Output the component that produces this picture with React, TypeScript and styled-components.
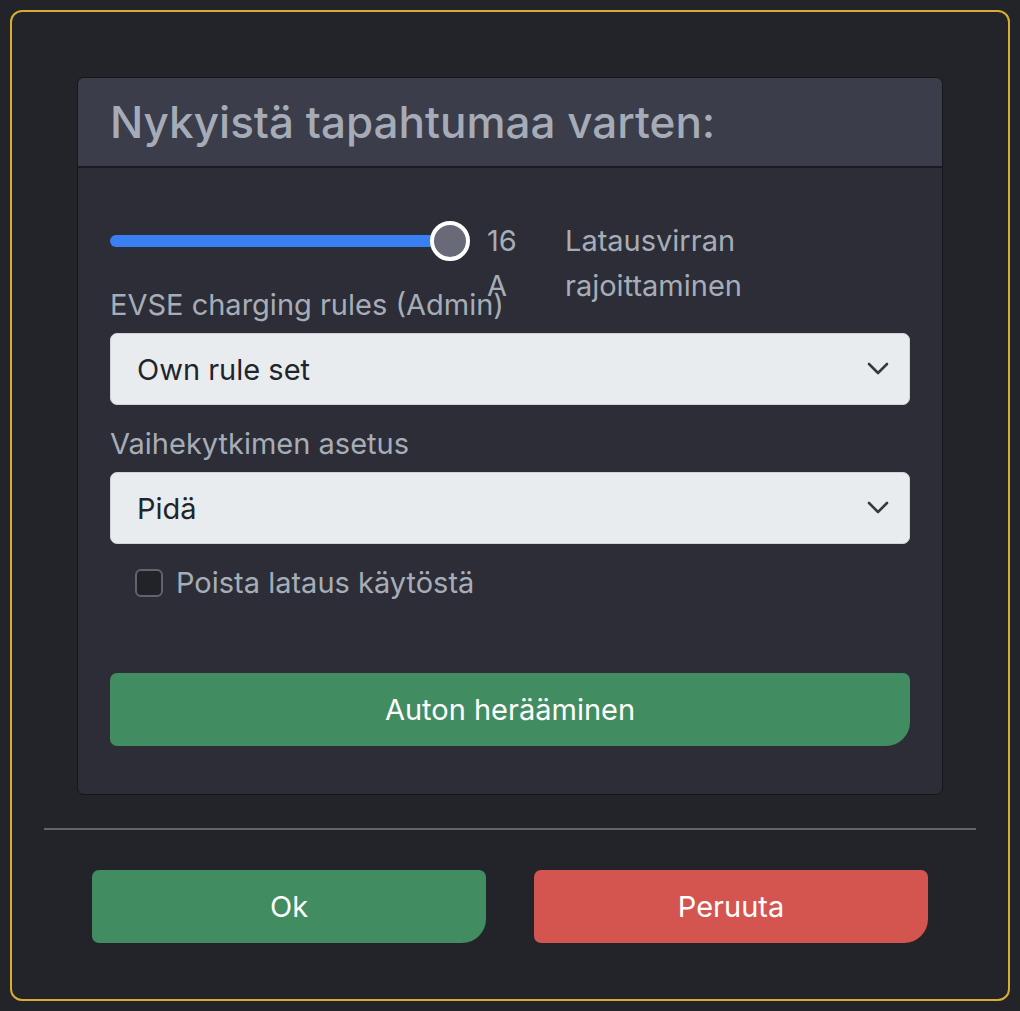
import styled, { createGlobalStyle } from "styled-components";

const Global = createGlobalStyle`
    body {
        margin: 0;
        background: #222429;
        font-family: Inter, "Noto Sans", sans-serif;
    }
`;

export default function App(){
    return (
        <Page>
            <Global />
            <Frame>
                <Card>
                    <CardHeader>
                        <Title>Nykyistä tapahtumaa varten:</Title>
                    </CardHeader>
                    <CardBody>
                        <SliderRow>
                            <Slider>
                                <Track />
                                <Thumb />
                            </Slider>
                            <Value>16 A</Value>
                            <SliderLabel>Latausvirran rajoittaminen</SliderLabel>
                        </SliderRow>

                        <Label>EVSE charging rules (Admin)</Label>
                        <Select>
                            <span>Own rule set</span>
                            <Chevron />
                        </Select>

                        <Label $top={16}>Vaihekytkimen asetus</Label>
                        <Select>
                            <span>Pidä</span>
                            <Chevron />
                        </Select>

                        <CheckRow>
                            <Box />
                            <span>Poista lataus käytöstä</span>
                        </CheckRow>

                        <Button $color="#428c62" $wide>Auton herääminen</Button>
                    </CardBody>
                </Card>

                <Divider />

                <Footer>
                    <Button $color="#428c62">Ok</Button>
                    <Button $color="#d45550">Peruuta</Button>
                </Footer>
            </Frame>
        </Page>
    );
};

function Chevron(){
    return (
        <svg width="22" height="14" viewBox="0 0 22 14" fill="none">
            <path d="M2 2l9 9 9-9" stroke="#343a40" strokeWidth="2.6" strokeLinecap="round" strokeLinejoin="round" />
        </svg>
    );
}

const Page = styled.div`
    padding: 10px;
`;

const Frame = styled.div`
    box-sizing: border-box;
    height: 991px;
    border: 2px solid #d9ad2f;
    border-radius: 12px;
    padding: 65px 32px 0;
`;

const Card = styled.div`
    margin: 0 33px;
    border: 1px solid #15161a;
    border-radius: 7px;
    overflow: hidden;
    background: #2c2d37;
`;

const CardHeader = styled.div`
    background: #3b3d4a;
    border-bottom: 2px solid #1b1c21;
    height: 88px;
    padding: 0 32px;
    display: flex;
    align-items: center;
`;

const Title = styled.h3`
    margin: 0;
    font-size: 44px;
    font-weight: 500;
    color: #a6acb7;
`;

const CardBody = styled.div`
    padding: 50px 32px 48px;
    display: flex;
    flex-direction: column;
    font-size: 29px;
    line-height: 45px;
    color: #a7adb7;
`;

const SliderRow = styled.div`
    display: flex;
    align-items: flex-start;
    height: 64px;
`;

const Slider = styled.div`
    position: relative;
    width: 360px;
    height: 45px;
    flex-shrink: 0;
`;

const Track = styled.div`
    position: absolute;
    left: 0;
    right: 20px;
    top: 17px;
    height: 12px;
    border-radius: 6px;
    background: #3a7ff2;
`;

const Thumb = styled.div`
    position: absolute;
    right: 0;
    top: 3px;
    box-sizing: border-box;
    width: 40px;
    height: 40px;
    border-radius: 50%;
    background: #696a78;
    border: 4px solid #fff;
`;

const Value = styled.div`
    width: 44px;
    margin-left: 17px;
    flex-shrink: 0;
`;

const SliderLabel = styled.div`
    width: 200px;
    margin-left: 34px;
`;

const Label = styled.div<{ $top?: number }>`
    margin-top: ${p => p.$top ?? 0}px;
`;

const Select = styled.div`
    box-sizing: border-box;
    height: 72px;
    margin-top: 6px;
    padding: 0 20px 0 26px;
    display: flex;
    align-items: center;
    justify-content: space-between;
    background: #e9ecef;
    border: 1px solid #ced4da;
    border-radius: 7px;
    color: #212529;
`;

const CheckRow = styled.div`
    margin-top: 16px;
    padding-left: 25px;
    display: flex;
    align-items: center;
    gap: 13px;
`;

const Box = styled.div`
    box-sizing: border-box;
    width: 28px;
    height: 28px;
    border: 2px solid #60656d;
    border-radius: 6px;
    background: #212328;
`;

const Button = styled.button<{ $color: string; $wide?: boolean }>`
    height: 73px;
    flex: ${p => (p.$wide ? "none" : "1")};
    margin-top: ${p => (p.$wide ? "68px" : "0")};
    border: none;
    border-radius: 7px 7px 24px 7px;
    background: ${p => p.$color};
    color: #fff;
    font-family: inherit;
    font-size: 29px;
`;

const Divider = styled.hr`
    margin: 33px 0 0;
    border: none;
    border-top: 2px solid #60646c;
`;

const Footer = styled.div`
    display: flex;
    gap: 48px;
    padding: 40px 48px 0;
`;
